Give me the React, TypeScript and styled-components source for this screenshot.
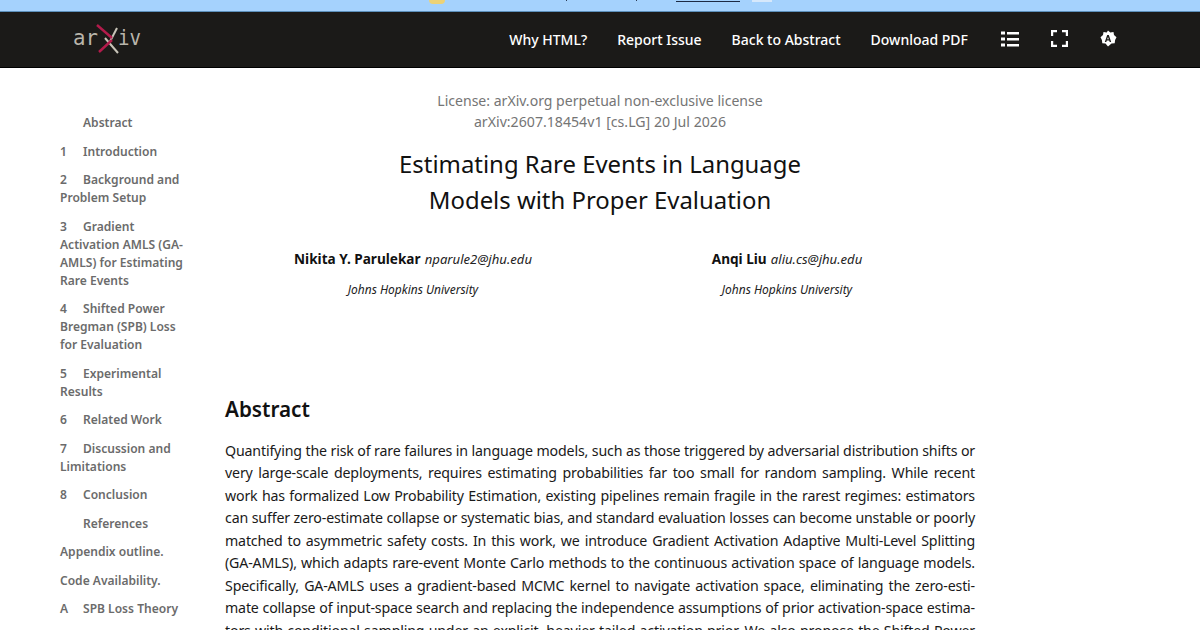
import React from 'react'
import styled, { createGlobalStyle } from 'styled-components'

const Global = createGlobalStyle`
  html, body { margin: 0; padding: 0; background: #fff; overflow: hidden; }
  body { width: 1200px; height: 630px; font-family: "Noto Sans", sans-serif; }
`

const Page = styled.div`
  width: 1200px;
  height: 630px;
  overflow: hidden;
  display: flex;
  flex-direction: column;
`

const Banner = styled.div`
  height: 11px;
  flex: none;
  background: #a5d2fd;
  border-bottom: 1px solid #5d90bb;
  position: relative;
  overflow: hidden;
`

const BannerLink = styled.span`
  position: absolute;
  left: 676px;
  top: 1px;
  width: 64px;
  height: 1px;
  background: #1c2a44;
`

const BannerEmoji = styled.span`
  position: absolute;
  left: 429px;
  top: 0;
  width: 16px;
  height: 4px;
  background: #ecd277;
  border-radius: 0 0 8px 8px;
`

const BannerTick = styled.span<{ $left: number }>`
  position: absolute;
  left: ${(p) => p.$left}px;
  top: 0;
  width: 1px;
  height: 1px;
  background: #2a3a55;
`

const BannerButton = styled.span`
  position: absolute;
  left: 752px;
  top: 0;
  width: 20px;
  height: 2px;
  background: #d6e8fb;
`

const Nav = styled.header`
  height: 55px;
  flex: none;
  background: #1b1a18;
  border-bottom: 1px solid #000;
  display: flex;
  align-items: center;
  padding: 0 83px 0 72px;
`

const Logo = styled.svg`
  width: 72px;
  height: 44px;
  flex: none;
`

const NavItems = styled.nav`
  margin-left: auto;
  display: flex;
  align-items: center;
  gap: 30px;
`

const NavLink = styled.span`
  color: #fff;
  font-size: 14px;
  font-weight: 500;
  white-space: nowrap;
`

const NavIcon = styled.svg<{ $gap?: number }>`
  width: 18px;
  height: 18px;
  flex: none;
  display: block;
  margin-left: ${(p) => p.$gap ?? 0}px;
  margin-bottom: 2px;
`

const Body = styled.div`
  flex: 1;
  display: flex;
  min-height: 0;
`

const Toc = styled.aside`
  width: 225px;
  flex: none;
  padding: 46px 30px 0 60px;
  box-sizing: border-box;
`

const TocItem = styled.div`
  color: #6b6b6b;
  font-size: 12.05px;
  font-weight: 600;
  line-height: 18px;
  margin-bottom: 10.5px;
`

const TocNum = styled.span`
  display: inline-block;
  width: 23px;
`

const Main = styled.main`
  width: 750px;
  flex: none;
`

const License = styled.div`
  color: #757575;
  font-size: 14.07px;
  line-height: 20.5px;
  text-align: center;
  padding-top: 23px;
`

const Dateline = styled.div`
  color: #757575;
  font-size: 14.15px;
  line-height: 20.5px;
  text-align: center;
`

const Title = styled.h1`
  margin: 14px 0 0;
  font-size: 23.9px;
  font-weight: 400;
  line-height: 36px;
  text-align: center;
  color: #111;
`

const Authors = styled.div`
  display: flex;
  margin-top: 30px;
`

const Author = styled.div<{ $width: number; $left: number }>`
  width: ${(p) => p.$width}px;
  margin-left: ${(p) => p.$left}px;
  text-align: center;
`

const AuthorLine = styled.div`
  line-height: 20px;
  white-space: nowrap;
`

const AuthorName = styled.span`
  font-size: 13.6px;
  font-weight: 700;
  color: #111;
`

const AuthorMail = styled.span`
  font-size: 13.1px;
  font-style: italic;
  color: #222;
`

const Affiliation = styled.div`
  font-size: 11.97px;
  font-style: italic;
  line-height: 16px;
  color: #222;
  margin-top: 13px;
  white-space: nowrap;
`

const AbstractTitle = styled.h2`
  margin: 97px 0 0;
  font-size: 20.7px;
  font-weight: 600;
  line-height: 28px;
  color: #111;
`

const Paragraph = styled.div`
  margin-top: 17px;
`

const Line = styled.div`
  font-size: 14.2px;
  letter-spacing: -0.16px;
  line-height: 22.45px;
  color: #1a1a1a;
  text-align: justify;
  text-align-last: justify;
  white-space: nowrap;
`

const tocItems: Array<[string, string]> = [
  ['', 'Abstract'],
  ['1', 'Introduction'],
  ['2', 'Background and Problem Setup'],
  ['3', 'Gradient Activation AMLS (GA-AMLS) for Estimating Rare Events'],
  ['4', 'Shifted Power Bregman (SPB) Loss for Evaluation'],
  ['5', 'Experimental Results'],
  ['6', 'Related Work'],
  ['7', 'Discussion and Limitations'],
  ['8', 'Conclusion'],
  ['', 'References'],
  ['-', 'Appendix outline.'],
  ['-', 'Code Availability.'],
  ['A', 'SPB Loss Theory'],
]

const lines = [
  'Quantifying the risk of rare failures in language models, such as those triggered by adversarial distribution shifts or',
  'very large-scale deployments, requires estimating probabilities far too small for random sampling. While recent',
  'work has formalized Low Probability Estimation, existing pipelines remain fragile in the rarest regimes: estimators',
  'can suffer zero-estimate collapse or systematic bias, and standard evaluation losses can become unstable or poorly',
  'matched to asymmetric safety costs. In this work, we introduce Gradient Activation Adaptive Multi-Level Splitting',
  '(GA-AMLS), which adapts rare-event Monte Carlo methods to the continuous activation space of language models.',
  'Specifically, GA-AMLS uses a gradient-based MCMC kernel to navigate activation space, eliminating the zero-esti-',
  'mate collapse of input-space search and replacing the independence assumptions of prior activation-space estima-',
  'tors with conditional sampling under an explicit, heavier-tailed activation prior. We also propose the Shifted Power',
]

const App = () => {
  return (
    <Page>
      <Global />
      <Banner>
        <BannerEmoji />
        <BannerTick $left={566} />
        <BannerTick $left={636} />
        <BannerLink />
        <BannerButton />
      </Banner>
      <Nav>
        <Logo viewBox="0 0 72 44">
          <text x="1" y="27" fill="#b9b5ab" fontFamily="DejaVu Sans Mono" fontSize="22" textLength="25" lengthAdjust="spacingAndGlyphs">ar</text>
          <text x="46" y="27" fill="#b9b5ab" fontFamily="DejaVu Sans Mono" fontSize="22" textLength="23" lengthAdjust="spacingAndGlyphs">iv</text>
          <line x1="33" y1="20" x2="46" y2="35" stroke="#c8c4b8" strokeWidth="2" />
          <line x1="38" y1="23.500" x2="45" y2="10" stroke="#c8c4b8" strokeWidth="2" />
          <line x1="25" y1="7" x2="40" y2="20" stroke="#b31b4b" strokeWidth="2.400" />
          <line x1="27" y1="34" x2="40" y2="22" stroke="#b31b4b" strokeWidth="2.400" />
        </Logo>
        <NavItems>
          <NavLink>Why HTML?</NavLink>
          <NavLink>Report Issue</NavLink>
          <NavLink>Back to Abstract</NavLink>
          <NavLink>Download PDF</NavLink>
          <NavIcon viewBox="0 0 18 18" $gap={3}>
            <path fill="#fff" d="M0 1.500h4v3H0zM6 2h12v2.500H6zM0 7.500h4v3H0zM6 8h12v2.500H6zM0 13.500h4v3H0zM6 14h12v2.500H6z" />
          </NavIcon>
          <NavIcon viewBox="0 0 18 18" $gap={2}>
            <path fill="none" stroke="#fff" strokeWidth="2.200" d="M1.100 6V1.100H6M11 1.100h4.900V6M15.900 11v4.900H11M6 15.900H1.100V11" />
          </NavIcon>
          <NavIcon viewBox="0 0 18 18">
            <path fill="#fff" d="M9 .5l2.300 1.900 3.200-.4.500 3 2.500 2.200-1.400 2.800-.4 3.300-3.200.3L9 16.500l-2.500-2.900-3.200-.3-.4-3.300L1.500 7.200 4 5l.5-3 3.200.4z" />
            <path fill="#1b1a18" d="M8.200 5h1.600l2.400 7h-1.500l-.5-1.500H7.800L7.300 12H5.800zM8.200 9.300h1.600L9 6.900z" />
          </NavIcon>
        </NavItems>
      </Nav>
      <Body>
        <Toc>
          {tocItems.map(([num, label]) => (
            <TocItem key={label}>
              {num === '-' ? null : <TocNum>{num}</TocNum>}
              {label}
            </TocItem>
          ))}
        </Toc>
        <Main>
          <License>License: arXiv.org perpetual non-exclusive license</License>
          <Dateline>arXiv:2607.18454v1 [cs.LG] 20 Jul 2026</Dateline>
          <Title>
            Estimating Rare Events in Language
            <br />
            Models with Proper Evaluation
          </Title>
          <Authors>
            <Author $width={240} $left={68}>
              <AuthorLine>
                <AuthorName>Nikita Y. Parulekar</AuthorName> <AuthorMail>nparule2@jhu.edu</AuthorMail>
              </AuthorLine>
              <Affiliation>Johns Hopkins University</Affiliation>
            </Author>
            <Author $width={152} $left={178}>
              <AuthorLine>
                <AuthorName>Anqi Liu</AuthorName> <AuthorMail>aliu.cs@jhu.edu</AuthorMail>
              </AuthorLine>
              <Affiliation>Johns Hopkins University</Affiliation>
            </Author>
          </Authors>
          <AbstractTitle>Abstract</AbstractTitle>
          <Paragraph>
            {lines.map((line) => (
              <Line key={line}>{line}</Line>
            ))}
          </Paragraph>
        </Main>
      </Body>
    </Page>
  )
}

export default App
